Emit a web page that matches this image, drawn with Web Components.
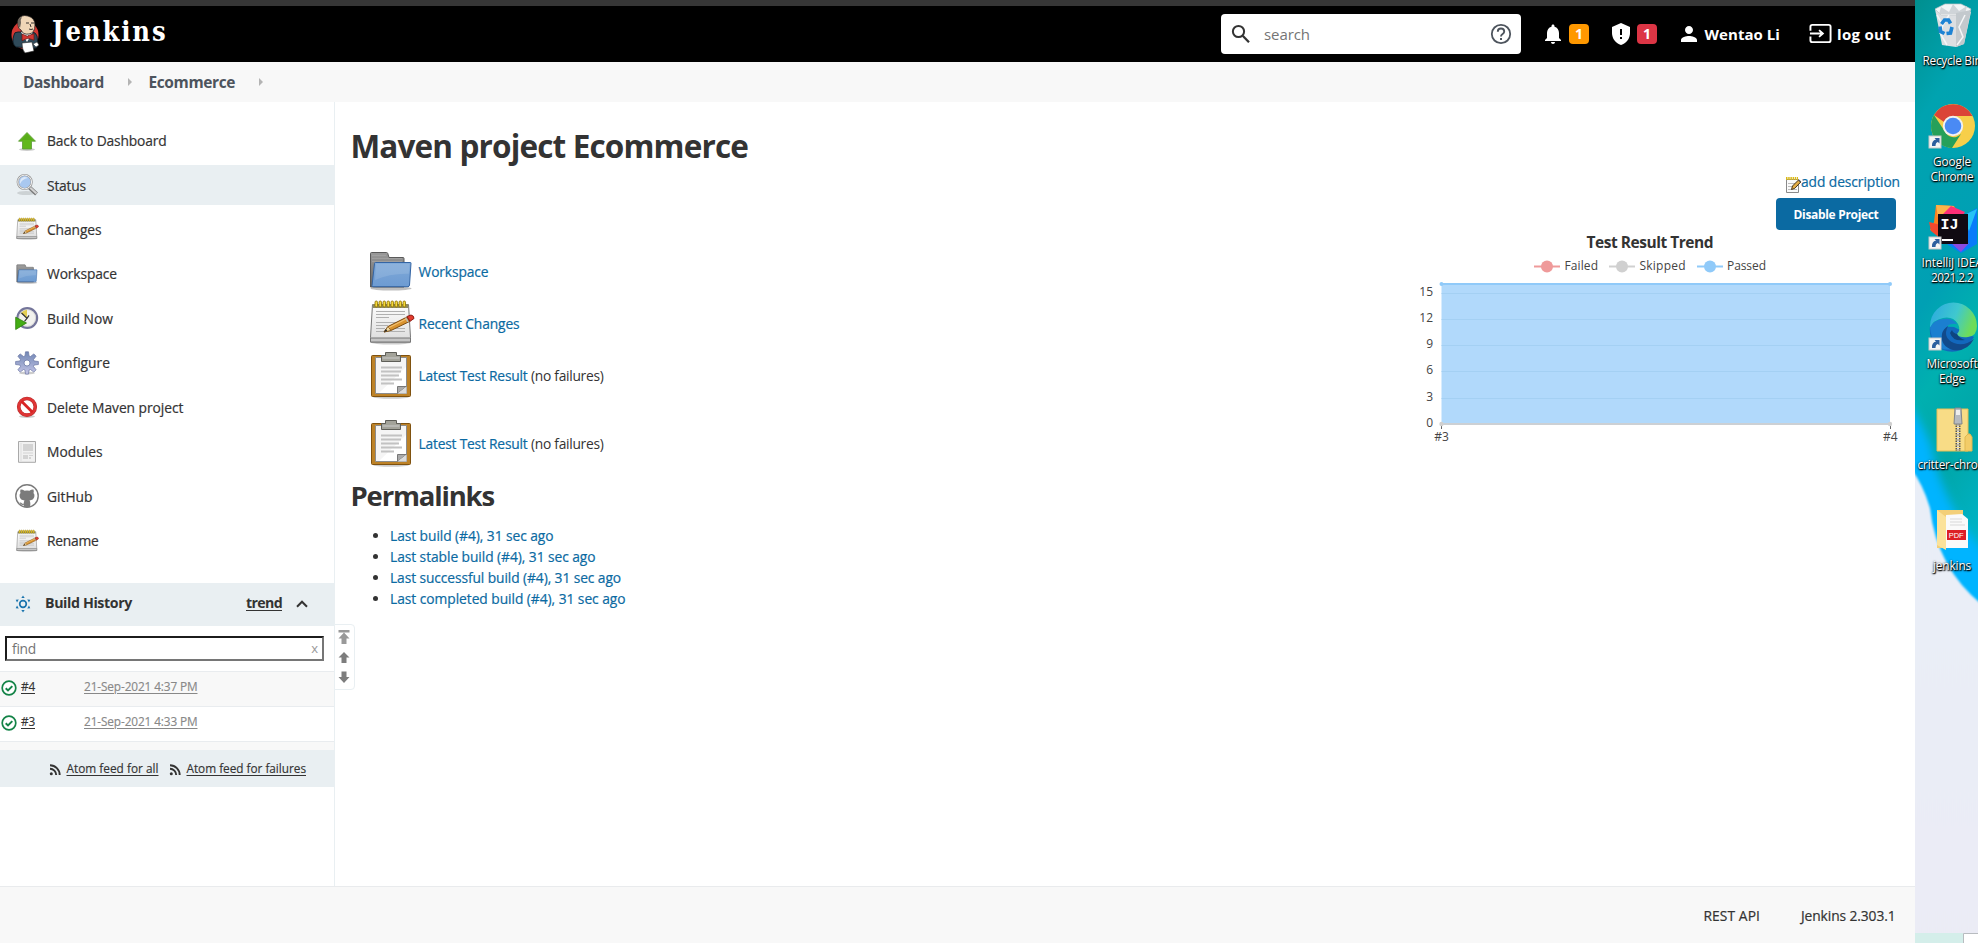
<!DOCTYPE html>
<html lang="en">
<head>
<meta charset="utf-8">
<title>Ecommerce [Jenkins]</title>
<style>
html,body{margin:0;height:100%;overflow:hidden;background:#fff}
body{font-family:"Open Sans","Noto Sans",sans-serif;font-size:14px;color:#333}
</style>
</head>
<body>
<jenkins-screen></jenkins-screen>
<script>
const define = (name, html, init) => customElements.define(name, class extends HTMLElement {
  connectedCallback() {
    if (this.shadowRoot) return;
    this.attachShadow({ mode: 'open' }).innerHTML = typeof html === 'function' ? html(this) : html;
    if (init) init(this);
  }
});

/* A run of text tracked so that it fills exactly w pixels. */
define('fit-text', el => `<style>:host{display:inline-block;white-space:pre;width:${el.getAttribute('w')}px;flex:none}
:host([u]) span{text-decoration:underline;text-underline-offset:2px}</style><span><slot></slot></span>`, el => {
  const s = el.shadowRoot.querySelector('span');
  const n = el.textContent.length;
  const d = (+el.getAttribute('w') - s.getBoundingClientRect().width) / n;
  s.style.letterSpacing = d.toFixed(3) + 'px';
});

const NOTE = `<defs><linearGradient id="p" x2="0" y2="1"><stop stop-color="#fdfdfd"/><stop offset="1" stop-color="#dcdcdc"/></linearGradient></defs>
<ellipse cx="24" cy="43.500" rx="20" ry="2" fill="#000" opacity=".2"/><path d="M5.500 5.500h36l2 33v4.500h-40v-4.500z" fill="url(#p)" stroke="#777"/><path d="M3.500 39h40v4h-40z" fill="#c5c5c5" stroke="#777"/>
<path d="M6 5h35v4H6z" fill="#8f8a5a"/><g fill="#f4d93a" stroke="#8a6d00" stroke-width=".8"><rect x="8" y="2" width="2.500" height="6" rx="1.200"/><rect x="12" y="2" width="2.500" height="6" rx="1.200"/><rect x="16" y="2" width="2.500" height="6" rx="1.200"/><rect x="20" y="2" width="2.500" height="6" rx="1.200"/><rect x="24" y="2" width="2.500" height="6" rx="1.200"/><rect x="28" y="2" width="2.500" height="6" rx="1.200"/><rect x="32" y="2" width="2.500" height="6" rx="1.200"/><rect x="36" y="2" width="2.500" height="6" rx="1.200"/></g>
<path d="M9 12.500h29M9 15.500h29M9 18.500h13M9 23.500h23M9 26.500h12M9 29.500h9M9 32.500h29M28 29.500h10" stroke="#b0b0b0"/>
<path d="M17 33l4-5.500 19-9.500 2.500 4.500L25 31z" fill="#d9932f" stroke="#7a4a10"/><path d="M17 33l4-5.500 3 4z" fill="#f0d9a0" stroke="#7a4a10" stroke-width=".7"/><path d="M17 33l2-3 1.200 2z" fill="#222"/><path d="M40 17.500l4-1.500q3 .5 3 3.500l-4 2.800z" fill="#e33b2e" stroke="#8e1c14"/><path d="M38.500 18.500l2.500 4.500" stroke="#bbb" stroke-width="1.500"/><path d="M22 28.500l17-8.500" stroke="#f3c272" stroke-width="1.200"/>`;
const FOLDER = `<defs><linearGradient id="f" x2="0" y2="1"><stop stop-color="#7fa9d8"/><stop offset="1" stop-color="#6d9bd2"/></linearGradient><linearGradient id="g" x2="0" y2="1"><stop stop-color="#9a9a9a"/><stop offset="1" stop-color="#666"/></linearGradient></defs>
<ellipse cx="24" cy="41.500" rx="20.500" ry="2" fill="#000" opacity=".25"/><path d="M3.500 40V6.500q0-1 1-1h15q1 0 1.300 1l1.200 4h14q1 0 1 1V40z" fill="url(#g)" stroke="#5a5a5a"/><path d="M5 8.500h14M5 11.500h30M5 14.500h30" stroke="#aaa" opacity=".6"/>
<path d="M8.500 15.500h35q.5 0 .5.700L42.500 38q-.2 1.700-1.500 1.700H6q-1 0-1-1L7.500 16.500q.1-1 1-1z" fill="url(#f)" stroke="#3465a4"/><path d="M9 16.700h33.500l-.7 10Q24 26 8 33z" fill="#fff" opacity=".12"/>`;
const LINK = `<rect x="0" y="34" width="12" height="12" fill="#f5f5f5" stroke="#c8c8c8"/><path d="M3 44q-.5-5.500 4-6.500L5.500 36H10.500v5.500l-1.600-1.500Q6.500 40.500 6.500 44z" fill="#2c5f9e"/>`;
const ICONS = {
logo:[40,`<ellipse cx="20" cy="21" rx="13.500" ry="14" fill="#d33833"/><path d="M9 21q0-3 4-3h13q5 0 6 4l1 9q-1 4-4 3l-18-1q-5-4-2-12z" fill="#2f4a5a" stroke="#12212a"/><path d="M16 18l6 10 6-10z" fill="#f4f4f4"/><path d="M13 6Q16 0 23 2q7 2 7 9 0 8-6 9-6 1-8-4-3-1-3-5z" fill="#f0d6b7" stroke="#231f20" stroke-width=".8"/><path d="M13 11q-2-6 4-8-2 3-1 6l-1 5z" fill="#6b6259"/><path d="M21 9h3M26 9h3M24 15q2 1 4 0M25 10l1 3" stroke="#231f20" fill="none" stroke-width=".9"/><path d="M17 20l6 2.500v-.8l6-2v6.500l-6-2-6 2.500z" fill="#d33833" stroke="#651713" stroke-width=".7"/><path d="M17 29l10-1 2 9-9 2q-3-3-3-10z" fill="#fff" stroke="#222" stroke-width=".6"/><path d="M28 30l4-2 2 3-3 2z" fill="#fff" stroke="#222" stroke-width=".5"/>`],
up:[24,`<ellipse cx="12" cy="20.500" rx="8" ry="1.500" opacity=".2"/><path d="M12 3.500l8.500 8.700h-4V20h-9v-7.800h-4z" fill="#62b81c" stroke="#5a9a35" stroke-width=".8"/><path d="M12 5l6 6H6z" fill="#4fa015" opacity=".5"/>`],
find:[24,`<ellipse cx="11" cy="20" rx="9" ry="2" opacity=".12"/><path d="M14.500 14.500l7 6.500" stroke="#777" stroke-width="4"/><path d="M15 14.500l6.500 6" stroke="#d2d2d2" stroke-width="2.200"/><circle cx="9.700" cy="9" r="7" fill="#a9c8f0" stroke="#9a9a9a" stroke-width="2.200"/><circle cx="9.700" cy="9" r="6.900" fill="none" stroke="#eee"/><path d="M5 9q0-4 4-5 3 0 4 1-6 1-8 6z" fill="#fff" opacity=".6"/>`],
note:[48,NOTE],folder:[48,FOLDER],
build:[24,`<circle cx="12.300" cy="12" r="9.800" fill="#f2f2ee" stroke="#74759a" stroke-width="2.200"/><circle cx="12.300" cy="12" r="8.300" fill="none" stroke="#c9c9c9" stroke-width=".6"/><path d="M12 12L6 7q2.500-3 6-3.300z" fill="#e5cf52"/><path d="M6.500 7L12 12.300l-2.500 3M12 12.300l2-3" stroke="#333" stroke-width="1.200" fill="none"/><path d="M.7 11.200L11.500 17 .7 23.500z" fill="#44ad14" stroke="#2d7d0b" stroke-width=".8"/>`],
gear:[24,`<defs><linearGradient id="a" x2="0" y2="1"><stop stop-color="#6f86b4"/><stop offset="1" stop-color="#c4c4e6"/></linearGradient></defs><ellipse cx="12" cy="22" rx="8" ry="1.500" opacity=".2"/><path d="M10.500.8h3l.5 4.100 1.500.6 3.300-2.600 2.300 2.300L18.500 8.500l.6 1.500 4.300.5v3l-4.300.5-.6 1.500 2.600 3.300-2.300 2.300-3.300-2.600-1.500.6-.5 4h-3l-.5-4-1.500-.6-3.300 2.600-2.300-2.300 2.600-3.300-.6-1.500-4.300-.5v-3l4.300-.5.6-1.500L2.900 5.200l2.300-2.300 3.300 2.600 1.500-.6z" fill="url(#a)" stroke="#6a76a4" stroke-width=".7"/><circle cx="12" cy="12" r="3" fill="#fff" stroke="#6a76a4" stroke-width=".8"/>`],
stop:[24,`<ellipse cx="12" cy="21.500" rx="8" ry="1.500" opacity=".2"/><circle cx="12" cy="11.800" r="8.300" fill="#fff" stroke="#b83030" stroke-width="3.600"/><circle cx="12" cy="11.800" r="8.300" fill="none" stroke="#df3535" stroke-width="2.600"/><path d="M6.500 6.300l11 11" stroke="#d92424" stroke-width="2.800"/>`],
modules:[24,`<path d="M3.500 1.500h17v20.800h-17z" fill="#f1f1f1" stroke="#a9a9a9"/><path d="M8 4h10v7H8zM8 12.500h10v1H8zM8 15h5v4H8zM14 15h4v1h-4zM14 17h2v2h-2z" fill="#d3d3d3"/><path d="M6 3v18" stroke="#ddd"/>`],
github:[24,`<circle cx="12" cy="12" r="11.200" fill="#fff" stroke="#7b7b7b" stroke-width="1.400"/><path d="M5.500 5.500q2-.3 4 1.200 2.500-.5 5 0 2-1.500 4-1.200.6 2 0 3.500Q20 10.500 19.300 13q-.9 3-4.800 3.500.8 1 .8 2.500v4h-6.600v-2.200Q5.500 21.500 4.500 18.500q1.800-.4 2.500 1 .7.600 1.700.2.100-2.200.8-3.200Q5.500 16 4.700 13 4 10.500 5.500 9q-.6-1.500 0-3.500z" fill="#7b7b7b"/>`],
sun:[16,`<circle cx="8" cy="8" r="3.300" fill="none" stroke="#1a74ad" stroke-width="1.700"/><g fill="#1a74ad"><path id="r" d="M8-.4l1.700 2.500H6.300z"/><use href="#r" transform="rotate(60 8 8)"/><use href="#r" transform="rotate(120 8 8)"/><use href="#r" transform="rotate(180 8 8)"/><use href="#r" transform="rotate(240 8 8)"/><use href="#r" transform="rotate(300 8 8)"/></g>`],
chev:[12,`<path d="M1 8.700L6 3.700l5 5" fill="none" stroke="#333" stroke-width="2"/>`],
ok:[16,`<circle cx="8" cy="8" r="6.800" fill="#fff" stroke="#138347" stroke-width="1.700"/><path d="M4.700 8.200l2.300 2.200 4.300-4.300" fill="none" stroke="#138347" stroke-width="2"/>`],
rss:[12,`<circle cx="2.300" cy="9.700" r="1.500" fill="#333"/><path d="M1 4.800A6.200 6.200 0 017.200 11M1 1.300A9.700 9.700 0 0110.700 11" fill="none" stroke="#333" stroke-width="1.900"/>`],
clip:[48,`<ellipse cx="24" cy="46" rx="18" ry="1.800" opacity=".2"/><rect x="4.500" y="4.500" width="39" height="41" rx="1" fill="#bd8227" stroke="#7f5210"/><path d="M8.500 6.500h31v36h-31z" fill="#f5f5f5" stroke="#8c8c8c"/><path d="M39 34v8H12L39 16z" fill="#fff"/><path d="M14 16.500h21M14 20.500h20M14 24.500h18M14 28.500h21M14 32.500h13" stroke="#c2c2c2" stroke-width="1.800"/><path d="M30.500 35.500h9L30.500 42.500z" fill="#aaa" stroke="#777"/><path d="M39.500 35.500v7h-9z" fill="#ddd"/><path d="M18.500 4.500v-3h11v3h4v6h-19v-6z" fill="#a3a39a" stroke="#5e5e58"/><path d="M15.500 7h17" stroke="#ccc"/>`],
search:[24,`<circle cx="9.500" cy="9.500" r="5.600" fill="none" stroke="#333" stroke-width="2"/><path d="M13.700 13.700l6.300 6.600" stroke="#333" stroke-width="2.300"/>`],
help:[24,`<circle cx="12" cy="12" r="9.200" fill="none" stroke="#4d545d" stroke-width="1.800"/><path d="M8.800 9.700q0-3.200 3.200-3.200t3.200 2.900q0 1.400-1.600 2.600-1.600 1.100-1.600 2.600" fill="none" stroke="#4d545d" stroke-width="1.900"/><rect x="11" y="16" width="2" height="2" fill="#4d545d"/>`],
bell:[24,`<path d="M12 22c1.100 0 2-.9 2-2h-4c0 1.100.9 2 2 2zm6-6v-5c0-3.070-1.640-5.640-4.500-6.320V4c0-.83-.67-1.500-1.500-1.500s-1.500.67-1.500 1.500v.68C7.630 5.360 6 7.920 6 11v5l-2 2v1h16v-1l-2-2z" fill="#fff"/>`],
shield:[24,`<path d="M12 1L3 5v6c0 5.550 3.840 10.740 9 12 5.160-1.260 9-6.450 9-12V5l-9-4z" fill="#fff"/><path d="M11 7h2v6h-2zM11 15h2v2h-2z" fill="#000"/>`],
person:[24,`<path d="M12 12c2.210 0 4-1.790 4-4s-1.790-4-4-4-4 1.790-4 4 1.790 4 4 4zm0 2c-2.670 0-8 1.340-8 4v2h16v-2c0-2.660-5.330-4-8-4z" fill="#fff"/>`],
logout:[24,`<path d="M1.500 9V5q0-2 2-2h17q2 0 2 2v14q0 2-2 2h-17q-2 0-2-2v-4" fill="none" stroke="#fff" stroke-width="2"/><path d="M1 12h12M10.500 8.500l4 3.500-4 3.500" fill="none" stroke="#fff" stroke-width="1.900"/>`],
notemini:[16,`<path d="M1.500 2.500h12v13h-12z" fill="#fafafa" stroke="#8a8a8a"/><path d="M1 1.500h12" stroke="#d9b81a" stroke-width="3" stroke-dasharray="1.500 .700"/><path d="M3 6.500h7M3 9.500h5M3 12.500h9" stroke="#bbb"/><path d="M6.500 12.500l1-3.500 6-6 2.300 2-6 6.300z" fill="#e3ad45" stroke="#4a3517"/><path d="M13.500 3l2.300 2" stroke="#555" stroke-width="1.500"/>`],
bin:[48,`<path d="M6 8l36 3-7 32-8 3-14-2z" fill="#dcdfe2"/><path d="M6 8l10-5 16 0 10 5-4 6H12z" fill="#f4f5f6" stroke="#bfc5c9" stroke-width=".7"/><path d="M12 6l8 5 4-8 6 7 8-5-2 8-26 0z" fill="#cfd4d8"/><path d="M27 12l15-3-7 34-8 3z" fill="#c3c9cd"/><path d="M8 14l6 10-3 8 7 12M20 14l-6 10M36 14l-6 12 4 10-6 8" stroke="#f5f6f7" stroke-width="1.500" fill="none"/><g fill="none" stroke="#1d83d4" stroke-width="3.600"><path d="M12.500 23l3-4h4l2 3.500"/><path d="M23 26l-1.500 6-4 .5"/><path d="M11 25.500l.5 5 4 2"/></g>`],
chrome:[48,`<circle cx="24" cy="24" r="22" fill="#f7cf4a"/><path d="M5 13A22 22 0 0143.500 14H24a10 10 0 00-9 6z" fill="#db4437"/><path d="M5 13A22 22 0 0023 46l9-14a10 10 0 01-16.500-3z" fill="#26a05a"/><circle cx="24" cy="24" r="10.200" fill="#f1f1f1"/><circle cx="24" cy="24" r="8.300" fill="#4a8af4"/>${LINK}`],
idea:[48,`<path d="M7 2l18 1 9 14-20 17L1 27l4-8z" fill="#fc801d"/><path d="M7 2l18 1-15 18z" fill="#fdb44a"/><path d="M13 12l9-9 14 6-4 6-22 8z" fill="#fe2f77"/><path d="M0 19l12 3v14L2 28z" fill="#f5482d"/><path d="M34 13l14-8v36l-16 9-14-9z" fill="#087cfa"/><path d="M33 13l15-7-8 22z" fill="#25c3f5"/><path d="M22 40l18 0-8 9z" fill="#8a4be0"/><rect x="9" y="11" width="30" height="30" fill="#100a12"/><text x="11.500" y="26" font-family="Liberation Mono,monospace" font-weight="700" font-size="15" fill="#fff" style="text-shadow:none">IJ</text><path d="M13 37h11" stroke="#fff" stroke-width="2"/>${LINK}`],
edge:[48,`<defs><linearGradient id="e" x2="1" y2=".3"><stop stop-color="#2aa7e0"/><stop offset=".6" stop-color="#3fc8cf"/><stop offset="1" stop-color="#6edc5a"/></linearGradient></defs><path d="M1 22Q-1 40 14 46q14 5 26-5l5-8-20-10z" fill="#1268bd"/><path d="M1 22A23.500 23.500 0 0148 22q0 10-9 11-9 1-11-3 4-4 1-10Q24 12 14 14 4 16 1 24z" fill="url(#e)"/><path d="M1 24Q4 16 14 15q10-1 14 5-11-2-12 8-1 10 8 17-20 4-23-21z" fill="#1b7fd0"/><path d="M19 22q-6 12 6 17 10 4 20-4-7 13-21 11Q11 42 13 30q1-5 6-8z" fill="#114a8b"/><path d="M28 30q-4-1-5-4l-2 3q3 9 15 7-6-2-8-6z" fill="#0e4480"/>${LINK}`],
zip:[48,`<path d="M8 4h31v42H8z" fill="#f8dc86" stroke="#e5bf55"/><path d="M36 46V32l3-3h2l2 3v14z" fill="#f2cc68" stroke="#dfb850"/><path d="M29 18v28" stroke="#555" stroke-width="5" stroke-dasharray="1.500 1"/><path d="M29 18v28" stroke="#ddd" stroke-width="2" stroke-dasharray="1.500 1"/><path d="M26 3h6l1 16h-8z" fill="#b7bbc0" stroke="#80858b"/><path d="M27 5h4v5h-4z" fill="#eee"/>`],
pdf:[48,`<path d="M8 4h26v38H8z" fill="#f3cf78"/><path d="M17 9l16-1 6 5v29H17z" fill="#fafafa"/><path d="M21 13h12M21 16h12M21 19h15" stroke="#d8d8d8"/><path d="M8 4l9 7v33l-9-5z" fill="#fbe29a"/><rect x="18" y="24" width="19" height="10" fill="#dd1f26"/><text x="19.700" y="32.200" font-family="Liberation Sans,sans-serif" font-size="7.500" fill="#fff" style="text-shadow:none">PDF</text>`],
crumb:[10,`<path d="M3 1l4 4-4 4z" fill="#b4b4b4"/>`],
};
define('ui-icon', el => {
  const [b, svg] = ICONS[el.getAttribute('n')], s = el.getAttribute('s') || b;
  return `<style>:host{display:block;flex:none;width:${s}px;height:${s}px}svg{display:block;overflow:visible}</style><svg width="${s}" height="${s}" viewBox="0 0 ${b} ${b}">${svg}</svg>`;
});

define('top-header', `<style>
:host{display:flex;background:#000;border-top:6px solid #363636;box-sizing:border-box;height:62px;align-items:center;color:#fff;font-weight:700;font-size:15px;padding-bottom:1px}
.brand{font:700 27px/40px "DejaVu Serif Condensed","DejaVu Serif",serif;font-stretch:condensed;margin:0 0 3px 7px}
.box{display:flex;align-items:center;box-sizing:border-box;width:300px;height:40px;background:#fff;border-radius:4px;margin-left:auto;padding:0 8px;font-weight:400;font-size:15px;color:#757575}
.box ui-icon:last-child{margin-left:auto}
.b{width:20px;height:20px;border-radius:4px;font-size:14px;line-height:20px;text-align:center;background:#ff9800}
.r{background:#dc3545}
</style><ui-icon n="logo" style="margin-left:5px"></ui-icon><fit-text class="brand" w="115.500">Jenkins</fit-text>
<div class="box"><ui-icon n="search"></ui-icon><fit-text w="46" style="margin-left:11px">search</fit-text><ui-icon n="help"></ui-icon></div>
<ui-icon n="bell" s="24" style="margin-left:20px"></ui-icon><div class="b" style="margin-left:4px">1</div>
<ui-icon n="shield" style="margin-left:20px"></ui-icon><div class="b r" style="margin-left:4px">1</div>
<ui-icon n="person" style="margin-left:20px"></ui-icon><fit-text w="75.500" style="margin-left:3.500px">Wentao Li</fit-text>
<ui-icon n="logout" s="23" style="margin-left:29px"></ui-icon><fit-text w="54" style="margin:0 24px 0 5px">log out</fit-text>`);

define('bread-crumbs', `<style>:host{display:flex;height:40px;box-sizing:border-box;padding:0 0 0 23px;background:#f8f8f8;align-items:center;font-weight:700;font-size:15.500px;color:#4d545d}
ui-icon{margin:0 14px 0 20.500px}</style><fit-text w="81">Dashboard</fit-text><ui-icon n="crumb"></ui-icon><fit-text w="86.500">Ecommerce</fit-text><ui-icon n="crumb"></ui-icon>`);

define('side-task', el => `<style>:host{display:flex;height:40px;align-items:center;padding-left:15px;gap:8px;-webkit-text-stroke:.2px}
:host([on]){background:#e9eff2}</style><ui-icon n="${el.getAttribute('icon')}" s="24"></ui-icon><slot></slot>`);

define('build-row', el => `<style>:host{display:flex;height:35px;box-sizing:border-box;border-top:1px solid #e9ecef;padding:0 0 6px 1px;align-items:center;font-size:11.800px;color:#333}
fit-text{-webkit-text-stroke:.15px}.d{margin-left:49px;color:#888}</style><ui-icon n="ok" style="margin:4px 4px 0 0"></ui-icon><fit-text w="14" u>${el.getAttribute('n')}</fit-text><fit-text class="d" w="113.500" u>${el.getAttribute('d')}</fit-text>`);

define('scroll-tools', `<style>:host{display:block;box-sizing:border-box;width:21px;height:66px;border:1px solid #e9eff2;border-radius:0 4px 4px 0;background:#fff}svg{display:block}</style>
<svg width="19" height="64" viewBox="1.500 1 19 64"><path d="M5 6h11v2.500H5zM10.500 8.500l5.500 6h-3V20H8v-5.500H5z" fill="#999"/><path d="M10.500 28l5.500 5.500h-3V39H8v-5.500H5zM10.500 59L16 53h-3v-5.500H8V53H5z" fill="#7d7d7d"/></svg>`);

define('side-panel', `<style>
:host{display:flex;flex-direction:column;position:relative;width:335px;box-sizing:border-box;border-right:1px solid #e9eff2;padding-top:18.600px;flex:none;font-size:13.800px}
nav{display:flex;flex-direction:column;gap:4.450px;margin-bottom:22.400px}
.head{display:flex;align-items:center;height:43px;box-sizing:border-box;background:#e9eff2;padding:0 26px 3px 15px;font-weight:700;font-size:14.200px}
.q{display:flex;justify-content:space-between;align-items:center;margin:10px 10px 10px 5px;height:25px;box-sizing:border-box;border:2px solid #767676;border-color:#1c1c1c #767676 #767676 #1c1c1c;padding:0 4px 0 5px;color:#757575}
.x{color:#999;line-height:14px;font-size:13px}
.feed{display:flex;align-items:center;height:37px;background:#e9eff2;box-sizing:border-box;padding:0 0 1px 49px;font-size:11.800px;-webkit-text-stroke:.15px}
.feed ui-icon{margin:4px 5.500px 0 0}
scroll-tools{position:absolute;left:334px;top:522px}
</style><nav>
<side-task icon="up"><fit-text w="119.500">Back to Dashboard</fit-text></side-task>
<side-task icon="find" on><fit-text w="39">Status</fit-text></side-task>
<side-task icon="note"><fit-text w="54.500">Changes</fit-text></side-task>
<side-task icon="folder"><fit-text w="70">Workspace</fit-text></side-task>
<side-task icon="build"><fit-text w="66">Build Now</fit-text></side-task>
<side-task icon="gear"><fit-text w="63">Configure</fit-text></side-task>
<side-task icon="stop"><fit-text w="136.500">Delete Maven project</fit-text></side-task>
<side-task icon="modules"><fit-text w="55.500">Modules</fit-text></side-task>
<side-task icon="github"><fit-text w="45.500">GitHub</fit-text></side-task>
<side-task icon="note"><fit-text w="51.500">Rename</fit-text></side-task></nav>
<div class="head"><ui-icon n="sun" style="margin-top:3px"></ui-icon><fit-text w="87" style="margin-left:14px">Build History</fit-text><fit-text w="36" u style="margin-left:auto">trend</fit-text><ui-icon n="chev" style="margin:2px 0 0 14px"></ui-icon></div>
<div class="q"><fit-text w="24">find</fit-text><span class="x">x</span></div>
<build-row n="#4" d="21-Sep-2021 4:37 PM" style="background:#f8f8f8"></build-row>
<build-row n="#3" d="21-Sep-2021 4:33 PM"></build-row>
<div style="height:9px;box-sizing:border-box;border-top:1px solid #e9ecef;background:#f8f8f8"></div>
<div class="feed"><ui-icon n="rss"></ui-icon><fit-text w="92" u>Atom feed for all</fit-text><ui-icon n="rss" style="margin-left:10.500px"></ui-icon><fit-text w="119.500" u>Atom feed for failures</fit-text></div>
<scroll-tools></scroll-tools>`);

define('summary-row', el => `<style>:host{display:flex;height:52px;align-items:center;gap:4px;padding-left:16px}</style><ui-icon n="${el.getAttribute('icon')}"></ui-icon><slot></slot>`);

define('trend-chart', () => {
  let g = '';
  [[0,424],[3,398.5],[6,371.5],[9,345.5],[12,319.5],[15,293.5]].forEach(([v,y]) => {
    if (v) g += `<path d="M1441.500 ${y}H1890" stroke="#a4d0f3"/>`;
    g += `<text x="1433" y="${y+2.5}" text-anchor="end">${v}</text>`; });
  const leg = (x, c, cx, t, w) => `<path d="M${x} 266.500h26" stroke="${c}" stroke-width="2"/><circle cx="${x+13}" cy="266.500" r="6" fill="${c}"/><text x="${cx}" y="270" textLength="${w}">${t}</text>`;
  return `<style>:host{display:block}svg{display:block}text{font:12px "Open Sans",sans-serif;fill:#444}</style>
<svg width="515" height="220" viewBox="1400 230 515 220"><text x="1586.500" y="248" textLength="127" style="font-weight:700;font-size:15.500px;fill:#333">Test Result Trend</text>
${leg(1534,'#ef9a9a',1564.5,'Failed',33.5)}${leg(1609,'#d0d0d0',1639.5,'Skipped',46)}${leg(1697,'#90caf9',1727,'Passed',39)}
<path d="M1441.500 284H1890V424H1441.500z" fill="#b1d9fb"/>${g}
<path d="M1441 284H1890" stroke="#90caf9" stroke-width="2"/><circle cx="1441.500" cy="284" r="2" fill="#90caf9"/><circle cx="1890" cy="284" r="2" fill="#90caf9"/>
<path d="M1441.500 424v5M1890.500 424v5" stroke="#666"/><path d="M1441 424H1890" stroke="#ccd0d4" stroke-width="2"/><circle cx="1441.500" cy="424" r="2.200" fill="#d0d0d0"/><circle cx="1890" cy="424" r="2.200" fill="#d0d0d0"/>
<text x="1441.500" y="441" text-anchor="middle">#3</text><text x="1890.300" y="441" text-anchor="middle">#4</text></svg>`; });

define('project-main', `<style>
:host{display:block;flex:1;padding:22px 0 0 15.500px;min-width:0}
h1,h2{margin:0;font-weight:700}h1{font-size:31.500px;line-height:44px}h2{font-size:27.500px;line-height:40px;margin:7px 0 9px}
.row{display:flex;justify-content:space-between}
.l{padding-top:77px;font-size:13.800px}.r{padding-top:3px;display:flex;flex-direction:column;align-items:flex-end}
a{color:#0b6aa2;display:inline-flex;-webkit-text-stroke:.2px}
ul{margin:0;padding:0 0 0 39px;line-height:21px;list-style:none}
li{display:flex;align-items:center}li::before{content:"";width:5.500px;height:5.500px;border-radius:50%;background:#333;margin:0 12px 0 -17px}
.add{height:22px;line-height:22px;margin-right:15px;align-items:center;gap:0;font-size:13.800px}
.btn{background:#0b6aa2;color:#fff;font:700 12px/33px "Open Sans",sans-serif;border-radius:4px;width:120px;height:32px;margin:5px 19px 0 0;text-align:center}
</style><h1><fit-text w="397.500">Maven project Ecommerce</fit-text></h1>
<div class="row"><div class="l">
<summary-row icon="folder"><a><fit-text w="70">Workspace</fit-text></a></summary-row>
<summary-row icon="note"><a><fit-text w="101">Recent Changes</fit-text></a></summary-row>
<summary-row icon="clip"><a><fit-text w="109">Latest Test Result</fit-text></a><fit-text w="72.500" style="margin-left:-.5px">(no failures)</fit-text></summary-row>
<summary-row icon="clip" style="margin-top:16px"><a><fit-text w="109">Latest Test Result</fit-text></a><fit-text w="72.500" style="margin-left:-.5px">(no failures)</fit-text></summary-row>
<h2><fit-text w="143.500">Permalinks</fit-text></h2>
<ul><li><a><fit-text w="163.500">Last build (#4), 31 sec ago</fit-text></a></li><li><a><fit-text w="205.500">Last stable build (#4), 31 sec ago</fit-text></a></li><li><a><fit-text w="231">Last successful build (#4), 31 sec ago</fit-text></a></li><li><a><fit-text w="235.500">Last completed build (#4), 31 sec ago</fit-text></a></li></ul>
</div><div class="r"><a class="add"><ui-icon n="notemini" style="margin-top:6px"></ui-icon><fit-text w="99">add description</fit-text></a>
<div class="btn"><fit-text w="85">Disable Project</fit-text></div><trend-chart></trend-chart></div></div>`);

define('page-footer', `<style>:host{display:flex;justify-content:flex-end;height:57px;box-sizing:border-box;border-top:1px solid #e9ebed;background:#f8f8f8;gap:41px;padding:0 19.500px 0 0;align-items:center;font-size:13.800px;-webkit-text-stroke:.2px}</style><fit-text w="56.500">REST API</fit-text><fit-text w="94.500">Jenkins 2.303.1</fit-text>`);

define('desk-item', el => `<style>:host{display:flex;flex-direction:column;align-items:center;height:101px;width:76px;flex:none;color:#fff;font-size:11.800px;line-height:15px;text-shadow:1px 1px 1px #000,0 1px 2px #000,0 0 2px #0008}ui-icon{margin:0 0 4px 1px}</style><ui-icon n="${el.getAttribute('icon')}"></ui-icon><slot></slot>`);

define('desk-top', `<style>:host{display:grid;width:63px;height:943px;overflow:hidden}
svg,.i{grid-area:1/1}.i{display:flex;flex-direction:column;padding-top:1px;margin-left:-1px;height:900px;min-width:0}</style>
<svg width="63" height="943" viewBox="0 0 63 943"><defs><linearGradient id="t" x1="0" x2=".15" y2="1"><stop stop-color="#008f8f"/><stop offset=".2" stop-color="#00a3b0"/><stop offset=".5" stop-color="#00a0b4"/><stop offset=".64" stop-color="#00b0b0"/><stop offset=".8" stop-color="#00a6a8"/><stop offset="1" stop-color="#00b4c8"/></linearGradient><linearGradient id="w" x2="0" y2="1"><stop stop-color="#e9eff8"/><stop offset="1" stop-color="#ebebf5"/></linearGradient><filter id="s"><feGaussianBlur stdDeviation="1.200"/></filter><filter id="m" x="-1" y="-.5" width="3" height="2"><feGaussianBlur stdDeviation="5"/></filter></defs>
<path d="M0 0h63v620H0z" fill="url(#t)"/><path d="M-30 375Q0 405 16 445 32 525 95 575V680H-30z" fill="#00b4ff" filter="url(#m)"/><path d="M-10 462Q6 478 15 508 22 570 70 607V980H-10z" fill="url(#w)" filter="url(#s)"/>
<path d="M0 933h48v10H0z" fill="#d4eeea"/><path d="M48.500 950V933.500H70V950z" fill="#fff" stroke="#b8bcc0"/></svg>
<div class="i"><desk-item icon="bin"><fit-text w="59">Recycle Bin</fit-text></desk-item>
<desk-item icon="chrome"><fit-text w="38">Google</fit-text><fit-text w="43">Chrome</fit-text></desk-item>
<desk-item icon="idea"><fit-text w="61">IntelliJ IDEA</fit-text><fit-text w="42">2021.2.2</fit-text></desk-item>
<desk-item icon="edge"><fit-text w="51">Microsoft</fit-text><fit-text w="26">Edge</fit-text></desk-item>
<desk-item icon="zip"><fit-text w="69">critter-chro...</fit-text></desk-item>
<desk-item icon="pdf"><fit-text w="38">jenkins</fit-text></desk-item></div>`);

define('jenkins-screen', `<style>:host{display:grid;grid-template-columns:1915px 63px;height:943px;overflow:hidden}.p{display:flex;flex-direction:column;background:#fff;height:943px}.b{display:flex;flex:1;min-height:0}</style>
<div class="p"><top-header></top-header><bread-crumbs></bread-crumbs><div class="b"><side-panel></side-panel><project-main></project-main></div><page-footer></page-footer></div><desk-top></desk-top>`);
</script>
</body>
</html>
